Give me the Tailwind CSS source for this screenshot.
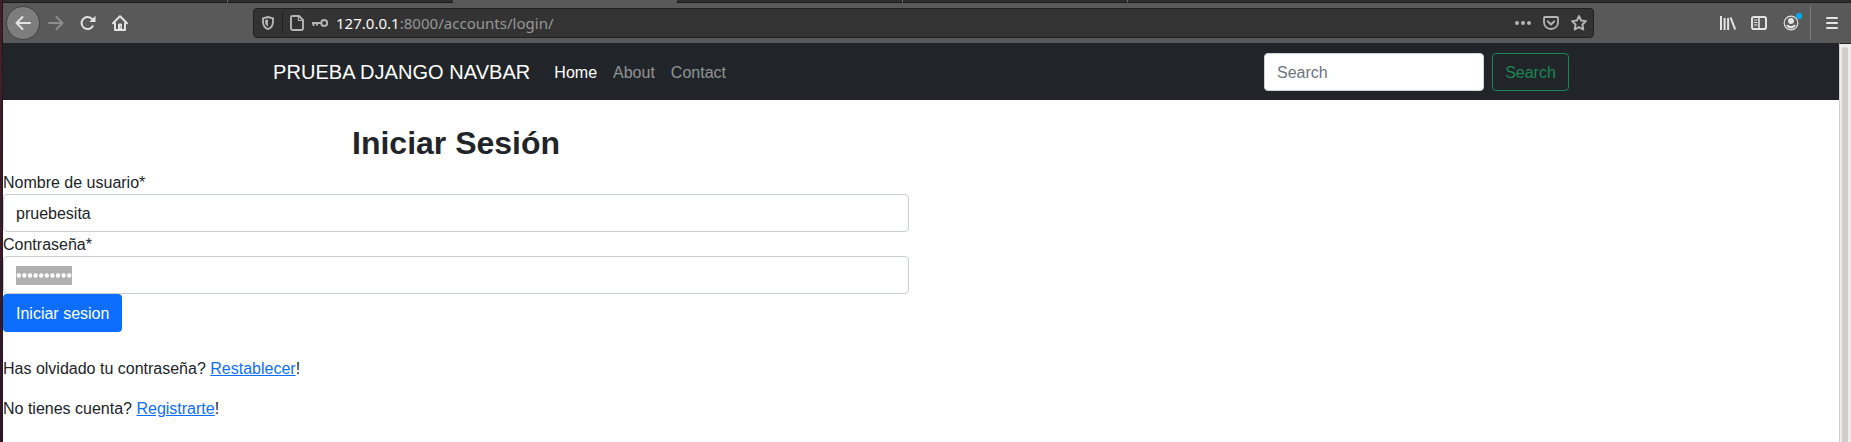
<!DOCTYPE html>
<html lang="es">
<head>
<meta charset="utf-8">
<title>Iniciar Sesión</title>
<script src="https://cdn.jsdelivr.net/npm/@tailwindcss/browser@4"></script>
</head>
<body class="flex h-[442px] w-[1851px] overflow-hidden bg-white font-['Liberation_Sans',Arial,sans-serif] text-base text-[#212529]">
<div class="w-[3px] shrink-0 border-r border-[#1c1a1e] bg-linear-to-b from-[#451f27] to-[#32152b]"></div>
<div class="flex min-w-0 grow flex-col">
  <!-- Tab strip -->
  <div class="flex h-[3px] shrink-0 bg-[#595959]">
    <div class="h-[3px] w-[225px] border-r border-b border-r-[#6b6b6b] border-b-[#1b1b1b] bg-[#2e2e2e]"></div>
    <div class="h-[3px] w-[225px] border-b border-[#1b1b1b] bg-[#2e2e2e]"></div>
    <div class="h-[3px] w-[224px]"></div>
    <div class="h-[3px] w-[226px] border-r border-b border-r-[#6b6b6b] border-b-[#1b1b1b] bg-[#2e2e2e]"></div>
    <div class="h-[3px] w-[225px] border-r border-b border-r-[#6b6b6b] border-b-[#1b1b1b] bg-[#2e2e2e]"></div>
    <div class="h-[3px] grow border-b border-[#1b1b1b] bg-[#2e2e2e]"></div>
  </div>
  <!-- Browser toolbar -->
  <div class="flex h-10 shrink-0 items-center bg-[#595959] text-[#e3e3e3]">
    <div class="ml-[3px] flex size-[34px] items-center justify-center rounded-full border border-[#434343] bg-[#7d7d7d]">
      <svg class="size-4" viewBox="0 0 16 16" fill="none" stroke="currentColor" stroke-width="2" stroke-linecap="round" stroke-linejoin="round"><path d="M15 8H1.5M7.5 2l-6 6 6 6"/></svg>
    </div>
    <svg class="ml-2 size-4 text-[#8e8e8e]" viewBox="0 0 16 16" fill="none" stroke="currentColor" stroke-width="2" stroke-linecap="round" stroke-linejoin="round"><path d="M1 8h13.500M8.500 2l6 6-6 6"/></svg>
    <svg class="ml-4 size-4" viewBox="0 0 16 16"><path d="M12.700 11.200A6 6 0 1 1 12.200 4.200" fill="none" stroke="currentColor" stroke-width="2" stroke-linecap="round"/><path d="M15.500 .8v6.200H9.300z" fill="currentColor"/></svg>
    <svg class="ml-4 size-4" viewBox="0 0 16 16"><path d="M1 8.300L8 1.300l7 7" fill="none" stroke="currentColor" stroke-width="2" stroke-linecap="round" stroke-linejoin="round"/><path d="M3 7.500V15h10V7.500" fill="none" stroke="currentColor" stroke-width="2" stroke-linejoin="round"/><path d="M6 15V9.500a1 1 0 0 1 1-1h2a1 1 0 0 1 1 1V15z" fill="currentColor"/><path d="M8 11.500h1v1H8z" fill="#595959"/></svg>
    <!-- Address bar -->
    <div class="ml-[125px] flex h-[30px] w-[1341px] items-center rounded border border-[#202020] bg-[#333333] text-[#b5b5b5]">
      <svg class="ml-[6px] size-4" viewBox="0 0 16 16"><path d="M8 1.900c1.600.9 3.300 1.200 5 1.200v3.400c0 3.400-1.900 6.400-5 7.600-3.100-1.200-5-4.200-5-7.600V3.100c1.700 0 3.400-.3 5-1.200z" fill="none" stroke="currentColor" stroke-width="1.900" stroke-linejoin="round"/><path d="M8 4.200v7.400c-1.900-1.100-2.900-2.900-2.900-5V4.900c1 0 2-.3 2.900-.7z" fill="currentColor"/></svg>
      <div class="ml-[6px] h-[22px] w-px bg-[#1f1f1f]"></div>
      <svg class="ml-[6px] size-4" viewBox="0 0 16 16" fill="none" stroke="currentColor" stroke-width="1.900" stroke-linejoin="round"><path d="M3.500 1H10l4 4v8.500A1.500 1.500 0 0 1 12.500 15h-9A1.500 1.500 0 0 1 2 13.500v-11A1.500 1.500 0 0 1 3.500 1z"/><path d="M9.500 1.500v4H14" stroke-width="1.200"/></svg>
      <svg class="ml-[7px] size-4" viewBox="0 0 16 16" fill="none" stroke="currentColor" stroke-width="2"><circle cx="12.200" cy="8" r="2.900"/><path d="M0 8h9M1.500 8v3M5 8v2.500" /></svg>
      <div class="ml-2 text-[15px] leading-6 tracking-[0.02px] whitespace-nowrap text-[#979797] font-['Noto_Sans',sans-serif]"><span class="text-[#f9f9fa]">127.0.0.1</span>:8000/accounts/login/</div>
      <svg class="ml-auto size-4" viewBox="0 0 16 16" fill="currentColor"><circle cx="2" cy="8" r="2"/><circle cx="8" cy="8" r="2"/><circle cx="14" cy="8" r="2"/></svg>
      <svg class="ml-3 size-4" viewBox="0 0 16 16" fill="none" stroke="currentColor" stroke-width="2" stroke-linejoin="round" stroke-linecap="round"><path d="M2 2h12a1 1 0 0 1 1 1v4.500a7 6.500 0 0 1-14 0V3a1 1 0 0 1 1-1z" stroke-width="1.800"/><path d="M4.800 6.400L8 9.500l3.200-3.100"/></svg>
      <svg class="ml-3 mr-[6px] size-4" viewBox="0 0 16 16" fill="none" stroke="currentColor" stroke-width="1.900" stroke-linejoin="round"><path d="M8 1l2.100 4.500 4.900.6-3.600 3.400.9 5L8 12.100l-4.300 2.400.9-5L1 6.100l4.900-.6z"/></svg>
    </div>
    <svg class="ml-[126px] size-4" viewBox="0 0 16 16" fill="none" stroke="currentColor" stroke-width="2"><path d="M1 1v14M4.600 3v12M8.100 3v12M10.600 2.500l4.600 12"/></svg>
    <svg class="ml-[15px] size-4" viewBox="0 0 16 16" fill="none" stroke="currentColor"><rect x="1" y="2" width="14" height="12" rx="1.800" stroke-width="2"/><path d="M8 2v12" stroke-width="1.600"/><path d="M3 5h3.500M3 7.500h3.500M3 10h3.500" stroke-width="1.200"/></svg>
    <div class="relative ml-4 size-4">
      <svg class="size-4" viewBox="0 0 16 16"><circle cx="8" cy="8" r="6.800" fill="none" stroke="currentColor" stroke-width="1.200"/><circle cx="8" cy="6" r="3" fill="currentColor"/><path d="M3.200 10.200c1.200-.8 1.900-.5 2.500 0 1.300 1 3.300 1 4.600 0 .6-.5 1.300-.8 2.500 0-.9 2-2.600 3.300-4.800 3.300s-3.900-1.300-4.800-3.300z" fill="currentColor"/></svg>
      <span class="absolute top-[-2px] left-[13px] size-[6px] rounded-full bg-[#00adf5]"></span>
    </div>
    <div class="ml-[11px] h-[34px] w-px bg-[#7b7b7b]"></div>
    <svg class="ml-[13px] size-4" viewBox="0 0 16 16" fill="none" stroke="currentColor" stroke-width="2" stroke-linecap="round"><path d="M3 3h10M3 8h10M3 13h10"/></svg>
  </div>
  <!-- Page viewport -->
  <div class="flex min-h-0 grow">
    <div class="flex grow flex-col">
      <nav class="flex h-[57px] shrink-0 justify-center bg-[#212529]">
        <div class="flex w-[1320px] items-center px-3">
          <a class="mr-4 text-xl leading-[30px] tracking-[0.05px] whitespace-nowrap text-white">PRUEBA DJANGO NAVBAR</a>
          <a class="px-2 pt-[2px] text-white">Home</a>
          <a class="px-2 pt-[2px] text-white/50">About</a>
          <a class="px-2 pt-[2px] text-white/50">Contact</a>
          <form class="ml-auto flex gap-2">
            <input class="h-[38px] w-[220px] rounded border border-[#ced4da] bg-white px-3 pt-[2px] placeholder:text-[#6c757d]" placeholder="Search">
            <button type="button" class="h-[38px] w-[77px] rounded border border-[#198754] pt-[2px] text-[#198754]">Search</button>
          </form>
        </div>
      </nav>
      <main class="pt-6">
        <h1 class="mb-2 ml-[349px] text-[32px] leading-[38px] font-bold">Iniciar Sesión</h1>
        <form class="flex w-[906px] flex-col items-start">
          <label class="h-6 leading-[26px]">Nombre de usuario*</label>
          <input class="h-[38px] w-full rounded border border-[#c9cdd4] px-3 pt-[2px] text-[#212529]" value="pruebesita">
          <label class="h-6 leading-[26px]">Contraseña*</label>
          <div class="flex h-[38px] w-full items-center rounded border border-[#c9cdd4] px-3">
            <svg class="h-[19px] w-14 bg-[#b0b0b0]" viewBox="0 0 56 19" fill="none" stroke="white" stroke-width="4.400" stroke-linecap="round"><path d="M2.800 9.500h50.500" stroke-dasharray="0 5.600"/></svg>
          </div>
          <button type="button" class="h-[38px] rounded bg-[#0d6efd] px-[13px] pt-[2px] text-white">Iniciar sesion</button>
        </form>
        <p class="mt-[25px]">Has olvidado tu contraseña? <a class="text-[#0d6efd] underline">Restablecer</a>!</p>
        <p class="mt-4">No tienes cuenta? <a class="text-[#0d6efd] underline">Registrarte</a>!</p>
      </main>
    </div>
    <!-- Scrollbar -->
    <div class="flex w-3 shrink-0 flex-col border-t border-l border-t-[#212529] border-l-[#d3d0cd] bg-[#eeedec] pt-[3px] pl-[2px]">
      <div class="w-[6px] grow rounded-t-full bg-[#cecece]"></div>
    </div>
  </div>
</div>
</body>
</html>
